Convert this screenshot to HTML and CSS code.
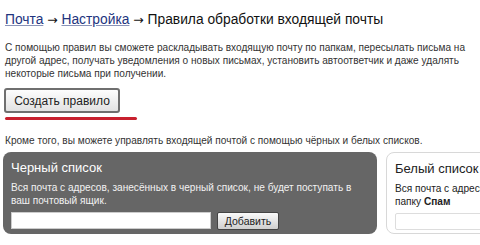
FILE: index.html
```html
<!DOCTYPE html>
<html>
<head>
    <title>Правила обработки входящей почты</title>
    <link rel="stylesheet" href="styles.css">
</head>
<body>
    <div class="page">
        <h1 class="crumbs">
            <a href="#">Почта</a> <span class="arr">&rarr;</span> <a href="#">Настройка</a> <span class="arr">&rarr;</span> Правила обработки входящей почты
        </h1>
        <p class="intro">С помощью правил вы сможете раскладывать входящую почту по папкам, пересылать письма на<br>другой адрес, получать уведомления о новых письмах, установить автоответчик и даже удалять<br>некоторые письма при получении.</p>

        <div class="create">
            <button class="btn-create">Создать правило</button>
            <div class="underline"></div>
        </div>

        <p class="note">Кроме того, вы можете управлять входящей почтой с помощью чёрных и белых списков.</p>

        <div class="lists">
            <div class="list-box black">
                <h3>Черный список</h3>
                <p>Вся почта с адресов, занесённых в черный список, не будет поступать в<br>ваш почтовый ящик.</p>
                <div class="add-row">
                    <input type="text" class="addr">
                    <button class="btn-add">Добавить</button>
                </div>
            </div>
            <div class="list-box white">
                <h3>Белый список</h3>
                <p>Вся почта с адресов, занесённых в белый список, никогда не попадёт в<br>папку <b>Спам</b></p>
                <div class="add-row">
                    <input type="text" class="addr">
                </div>
            </div>
        </div>
    </div>
</body>
</html>
```

FILE: styles.css
```css
html, body {
    margin: 0;
    padding: 0;
    background: #fff;
    overflow: hidden;
}
body {
    font-family: "Liberation Sans", Arial, sans-serif;
    color: #222;
}
.page {
    padding: 10px 0 0 5px;
    width: 640px;
}
.crumbs {
    margin: 0;
    font-size: 13.8px;
    font-weight: normal;
    line-height: 19px;
    color: #111;
}
.crumbs a {
    color: #22347e;
    text-decoration: underline;
    text-decoration-color: #8a93b8;
}
.arr {
    font-family: "DejaVu Sans", sans-serif;
    font-size: 12.5px;
}
.intro {
    margin: 12px 0 0;
    font-size: 10.1px;
    line-height: 13px;
    color: #333;
    white-space: nowrap;
}
.create {
    margin-top: 8px;
}
.btn-create {
    display: block;
    margin-left: -1px;
    width: 116px;
    height: 25px;
    padding: 0;
    border: 2px solid #6f6f6f;
    border-radius: 3px;
    background: linear-gradient(#fdfdfd, #e2e2e2);
    font-family: "Liberation Sans", Arial, sans-serif;
    font-size: 12px;
    color: #222;
}
.underline {
    width: 132px;
    height: 3px;
    margin-top: 4px;
    border-radius: 2px;
    background: #c8202e;
}
.note {
    margin: 14px 0 0;
    font-size: 10.1px;
    line-height: 13px;
    color: #333;
}
.lists {
    display: flex;
    gap: 9px;
    margin: 5px 0 0 -2px;
}
.list-box {
    height: 82px;
    box-sizing: border-box;
    border-radius: 8px;
    padding: 7px 8px 0 8px;
}
.list-box h3 {
    margin: 0;
    font-size: 13px;
    font-weight: normal;
    line-height: 18px;
}
.list-box p {
    margin: 4px 0 0;
    font-size: 10.1px;
    line-height: 13px;
    white-space: nowrap;
}
.black {
    width: 374px;
    background: #666;
    color: #fff;
}
.black p {
    color: #f2f2f2;
}
.white {
    width: 250px;
    border: 1px solid #d8d8d8;
    color: #222;
}
.white h3 {
    color: #222;
}
.add-row {
    display: flex;
    gap: 6px;
    margin-top: 5px;
}
.addr {
    width: 200px;
    height: 17px;
    box-sizing: border-box;
    border: 1px solid #ccc;
    margin: 0;
    padding: 0;
    background: #fff;
}
.white .addr {
    width: 240px;
    border-color: #ddd;
    border-radius: 2px;
}
.btn-add {
    width: 62px;
    height: 18px;
    padding: 0;
    border: 1px solid #444;
    border-radius: 2px;
    background: linear-gradient(#fafafa, #cfcfcf);
    font-family: "Liberation Sans", Arial, sans-serif;
    font-size: 10.5px;
    color: #222;
}
```
